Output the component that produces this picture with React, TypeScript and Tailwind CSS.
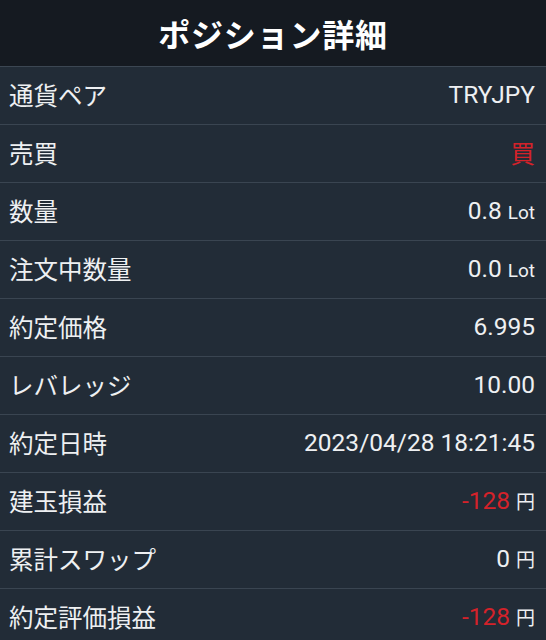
import React from 'react';

type Row = {
  label: string;
  value: string;
  unit?: string;
  red?: boolean;
};

const rows: Row[] = [
  { label: '通貨ペア', value: 'TRYJPY' },
  { label: '売買', value: '買', red: true },
  { label: '数量', value: '0.8', unit: 'Lot' },
  { label: '注文中数量', value: '0.0', unit: 'Lot' },
  { label: '約定価格', value: '6.995' },
  { label: 'レバレッジ', value: '10.00' },
  { label: '約定日時', value: '2023/04/28 18:21:45' },
  { label: '建玉損益', value: '-128', unit: '円', red: true },
  { label: '累計スワップ', value: '0', unit: '円' },
  { label: '約定評価損益', value: '-128', unit: '円', red: true },
];

const jp = "font-['Noto_Sans_CJK_JP','Noto_Sans',sans-serif]";
const num = "font-['Roboto','Noto_Sans_CJK_JP',sans-serif]";

export default function App() {
  return (
    <div className="w-[546px] h-[640px] overflow-hidden bg-[#222c37]">
      <div className="h-[67px] bg-[#151a21] border-b border-[#3c4753] flex items-center justify-center">
        <h1 className={`${jp} text-white text-[32px] font-bold tracking-wide`}>ポジション詳細</h1>
      </div>
      {rows.map((r) => (
        <div
          key={r.label}
          className="h-[58px] shrink-0 flex items-center justify-between pl-[9px] pr-[11px] border-b border-[#3a4551]"
        >
          <span className={`${jp} text-[24.5px] text-[#eef0f2]`}>{r.label}</span>
          <span className="flex items-baseline">
            <span
              className={`${r.value === '買' ? jp : num} text-[24.5px] ${r.red ? 'text-[#d4222a]' : 'text-[#eef0f2]'}`}
            >
              {r.value}
            </span>
            {r.unit && (
              <span
                className={`${r.unit === '円' ? jp : num} ml-[6px] text-[19px] text-[#eef0f2]`}
              >
                {r.unit}
              </span>
            )}
          </span>
        </div>
      ))}
    </div>
  );
}
